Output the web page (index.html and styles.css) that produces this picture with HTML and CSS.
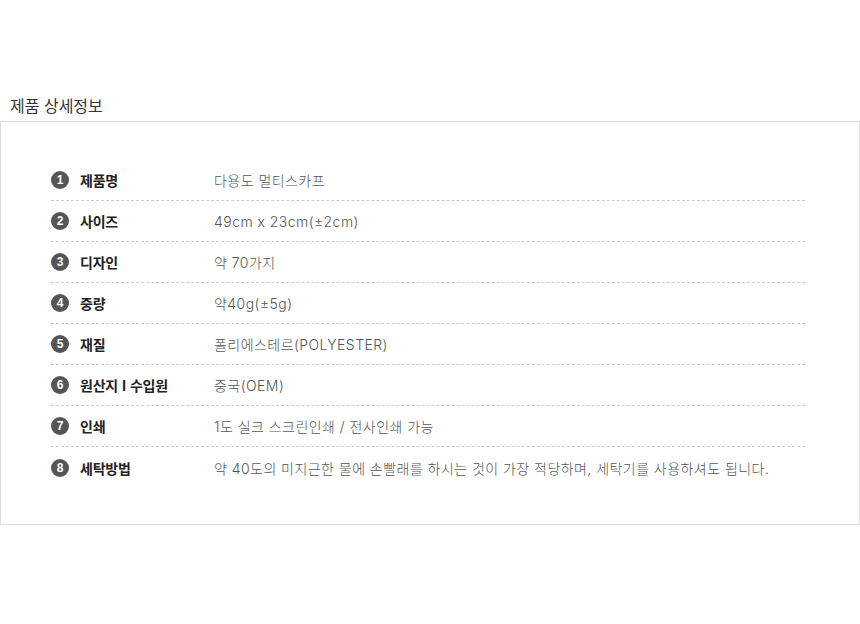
FILE: index.html
```html
<!DOCTYPE html>
<html lang="ko">
<head>
<meta charset="utf-8">
<link rel="stylesheet" href="styles.css">
</head>
<body>
<div class="page">
  <h2 class="title">제품 상세정보</h2>
  <div class="box">
    <ul class="spec">
      <li class="row"><span class="num">1</span><span class="label">제품명</span><span class="value">다용도 멀티스카프</span></li>
      <li class="row"><span class="num">2</span><span class="label">사이즈</span><span class="value">49cm x 23cm(±2cm)</span></li>
      <li class="row"><span class="num">3</span><span class="label">디자인</span><span class="value">약 70가지</span></li>
      <li class="row"><span class="num">4</span><span class="label">중량</span><span class="value">약40g(±5g)</span></li>
      <li class="row"><span class="num">5</span><span class="label">재질</span><span class="value">폴리에스테르(POLYESTER)</span></li>
      <li class="row"><span class="num">6</span><span class="label">원산지 I 수입원</span><span class="value">중국(OEM)</span></li>
      <li class="row"><span class="num">7</span><span class="label">인쇄</span><span class="value">1도 실크 스크린인쇄 / 전사인쇄 가능</span></li>
      <li class="row"><span class="num">8</span><span class="label">세탁방법</span><span class="value">약 40도의 미지근한 물에 손빨래를 하시는 것이 가장 적당하며, 세탁기를 사용하셔도 됩니다.</span></li>
    </ul>
  </div>
</div>
</body>
</html>
```
FILE: styles.css
```css
* { box-sizing: border-box; }
html, body { margin: 0; padding: 0; background: #fff; }
body { font-family: "Noto Sans CJK KR", "Noto Sans", sans-serif; color: #333; }
.page { padding-top: 93px; }
.title {
  margin: 0;
  padding-left: 10px;
  font-size: 16px;
  font-weight: 400;
  line-height: 24px;
  height: 28px;
  color: #333;
}
.box {
  border: 1px solid #ddd;
  width: 860px;
  height: 404px;
  padding: 38px 0 0 50px;
}
.spec { list-style: none; margin: 0; padding: 0; width: 754px; }
.row {
  display: flex;
  align-items: center;
  height: 41px;
  border-bottom: 1px dashed #ccc;
}
.row:last-child { border-bottom: none; }
.num {
  width: 18px; height: 18px;
  border-radius: 50%;
  background: #555;
  color: #fff;
  font-family: "Liberation Sans", Arial, sans-serif;
  font-weight: 700;
  font-size: 12px;
  display: flex; align-items: center; justify-content: center;
  flex: none;
}
.label {
  flex: none;
  margin-left: 11px;
  width: 134px;
  font-size: 14px;
  font-weight: 700;
  color: #222;
  letter-spacing: -0.2px;
  white-space: nowrap;
}
.value {
  font-family: "Inter", "Noto Sans CJK KR", sans-serif;
  font-size: 14px;
  font-weight: 300;
  color: #555;
  letter-spacing: 0.45px;
  white-space: nowrap;
}
```
